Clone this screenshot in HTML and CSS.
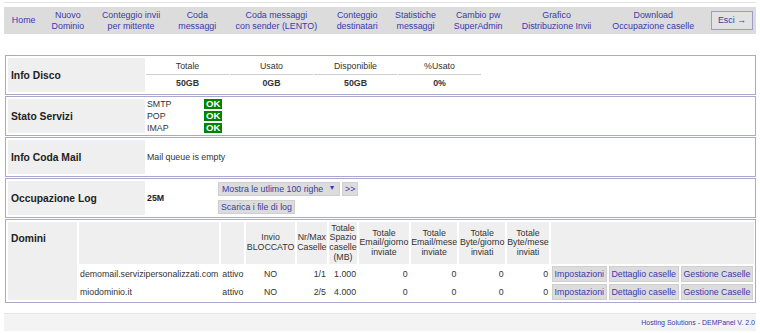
FILE: index.html
```html
<!DOCTYPE html>
<html lang="it">
<head>
<meta charset="UTF-8">
<title>DEMPanel</title>
<link rel="stylesheet" href="styles.css">
</head>
<body>
<div class="page">

<!-- Menu principale -->
<table class="menu">
  <tr>
    <td><a href="#">Home</a></td>
    <td><a href="#">Nuovo<br>Dominio</a></td>
    <td><a href="#">Conteggio invii<br>per mittente</a></td>
    <td><a href="#">Coda<br>messaggi</a></td>
    <td><a href="#">Coda messaggi<br>con sender (LENTO)</a></td>
    <td><a href="#">Conteggio<br>destinatari</a></td>
    <td><a href="#">Statistiche<br>messaggi</a></td>
    <td><a href="#">Cambio pw<br>SuperAdmin</a></td>
    <td><a href="#">Grafico<br>Distribuzione Invii</a></td>
    <td><a href="#">Download<br>Occupazione caselle</a></td>
    <td class="menu-exit"><a href="#" class="exit-button">Esci &rarr;</a></td>
  </tr>
</table>

<!-- Info Disco -->
<table class="section">
  <tr>
    <th class="label">Info Disco</th>
    <td class="content">
      <table class="disk">
        <tr>
          <th>Totale</th>
          <th>Usato</th>
          <th>Disponibile</th>
          <th>%Usato</th>
        </tr>
        <tr>
          <td>50GB</td>
          <td>0GB</td>
          <td>50GB</td>
          <td>0%</td>
        </tr>
      </table>
    </td>
  </tr>
</table>

<!-- Stato Servizi -->
<table class="section">
  <tr>
    <th class="label">Stato Servizi</th>
    <td class="content">
      <table class="services">
        <tr><td class="service-name">SMTP</td><td><span class="ok">OK</span></td></tr>
        <tr><td class="service-name">POP</td><td><span class="ok">OK</span></td></tr>
        <tr><td class="service-name">IMAP</td><td><span class="ok">OK</span></td></tr>
      </table>
    </td>
  </tr>
</table>

<!-- Info Coda Mail -->
<table class="section">
  <tr>
    <th class="label">Info Coda Mail</th>
    <td class="content">Mail queue is empty</td>
  </tr>
</table>

<!-- Occupazione Log -->
<table class="section">
  <tr>
    <th class="label">Occupazione Log</th>
    <td class="content">
      <div class="log-row">
        <span class="log-size">25M</span>
        <div class="log-actions">
          <div class="log-line">
            <span class="select-wrap">
              <select class="log-select">
                <option>Mostra le utlime 100 righe</option>
                <option>Mostra le utlime 500 righe</option>
              </select>
            </span>
            <button class="btn">&gt;&gt;</button>
          </div>
          <div class="log-line">
            <button class="btn">Scarica i file di log</button>
          </div>
        </div>
      </div>
    </td>
  </tr>
</table>

<!-- Domini -->
<table class="section section-domains">
  <tr>
    <th class="label label-domains">Domini</th>
    <td class="content">
      <table class="domains">
        <tr>
          <th class="fit"></th>
          <th class="fit"></th>
          <th class="fit">Invio<br>BLOCCATO</th>
          <th class="fit">Nr/Max<br>Caselle</th>
          <th class="fit">Totale<br>Spazio<br>caselle<br>(MB)</th>
          <th class="fit">Totale<br>Email/giorno<br>inviate</th>
          <th class="fit">Totale<br>Email/mese<br>inviate</th>
          <th class="fit">Totale<br>Byte/giorno<br>inviati</th>
          <th class="fit">Totale<br>Byte/mese<br>inviati</th>
          <th></th>
        </tr>
        <tr>
          <td>demomail.servizipersonalizzati.com</td>
          <td>attivo</td>
          <td class="center">NO</td>
          <td class="right">1/1</td>
          <td class="right">1.000</td>
          <td class="right">0</td>
          <td class="right">0</td>
          <td class="right">0</td>
          <td class="right">0</td>
          <td class="actions">
            <button class="btn">Impostazioni</button>
            <button class="btn">Dettaglio caselle</button>
            <button class="btn">Gestione Caselle</button>
          </td>
        </tr>
        <tr>
          <td>miodominio.it</td>
          <td>attivo</td>
          <td class="center">NO</td>
          <td class="right">2/5</td>
          <td class="right">4.000</td>
          <td class="right">0</td>
          <td class="right">0</td>
          <td class="right">0</td>
          <td class="right">0</td>
          <td class="actions">
            <button class="btn">Impostazioni</button>
            <button class="btn">Dettaglio caselle</button>
            <button class="btn">Gestione Caselle</button>
          </td>
        </tr>
      </table>
    </td>
  </tr>
</table>

<div class="footer">Hosting Solutions - DEMPanel V. 2.0</div>

</div>
</body>
</html>
```

FILE: styles.css
```css
body {
  margin: 0;
  font-family: "Liberation Sans", Arial, sans-serif;
  font-size: 8.8px;
  color: #333;
  background: #fff;
}
.page {
  margin: 2px 4px 0 4px;
  border-top: 1px solid #e2e2e2;
  padding-top: 4px;
}
a {
  color: #3a3aa8;
  text-decoration: none;
}

/* Menu in alto */
.menu {
  width: 100%;
  height: 27px;
  border-collapse: collapse;
  background: #dcdcdc;
  margin-bottom: 21px;
}
.menu td {
  text-align: center;
  font-size: 8.9px;
  line-height: 10.5px;
  padding: 0 6px;
  white-space: nowrap;
}
.menu .menu-exit {
  width: 42px;
  padding: 0 3px 0 6px;
}
.exit-button {
  display: inline-block;
  width: 40px;
  height: 17px;
  line-height: 17px;
  border: 1px solid #9c9cc8;
  background: #e2e2e2;
}

/* Box delle sezioni */
.section {
  width: calc(100% - 1px);
  margin: 0 0 1px 1px;
  border: 1px solid #a9a9cf;
  border-spacing: 2px;
  height: 40px;
  table-layout: fixed;
}
.label {
  width: 131px;
  background: #efefef;
  text-align: left;
  font-size: 10.3px;
  color: #222;
  padding: 0 3px;
}
.content {
  padding: 0;
  vertical-align: middle;
}

/* Info Disco */
.disk {
  border-collapse: separate;
  border-spacing: 1px 0;
  margin-left: -2px;
}
.disk th {
  width: 83px;
  padding: 0;
  font-weight: normal;
  height: 15px;
  border-bottom: 1px solid #cfcfcf;
}
.disk td {
  padding: 0;
  text-align: center;
  font-weight: bold;
  height: 17px;
}

/* Stato Servizi */
.services {
  border-collapse: collapse;
  margin: -1px 0;
}
.services td {
  padding: 0;
  height: 12px;
  line-height: 11px;
}
.service-name {
  width: 57px;
}
.ok {
  display: inline-block;
  background: #008400;
  color: #fff;
  font-weight: bold;
  font-size: 9.6px;
  line-height: 10px;
  padding: 0 2px;
}

/* Occupazione Log */
.log-row {
  display: flex;
  align-items: center;
}
.log-size {
  width: 71px;
  font-weight: bold;
  color: #222;
}
.log-actions {
  display: flex;
  flex-direction: column;
  gap: 4px;
}
.log-line {
  display: flex;
  gap: 2px;
}
.btn {
  font-family: "Liberation Sans", Arial, sans-serif;
  font-size: 8.8px;
  color: #3a3aa8;
  background: #dcdcdc;
  border: 1px solid #cfcfcf;
  padding: 0 2px;
  height: 14px;
  cursor: pointer;
}
.select-wrap {
  position: relative;
  display: inline-block;
}
.log-select {
  appearance: none;
  -webkit-appearance: none;
  font-family: "Liberation Sans", Arial, sans-serif;
  font-size: 8.8px;
  color: #3a3aa8;
  background: #dcdcdc;
  border: 1px solid #cfcfcf;
  border-radius: 0;
  width: 122px;
  height: 14px;
  padding: 0 3px;
  display: block;
}
.select-wrap::after {
  content: "\25BE";
  position: absolute;
  right: 6px;
  top: 1px;
  font-size: 8px;
  color: #3a3aa8;
  pointer-events: none;
}

/* Domini */
.section-domains .label-domains {
  width: 63px;
  vertical-align: top;
  padding-top: 11px;
}
.domains {
  width: calc(100% + 4px);
  margin: -2px;
  border-spacing: 2px;
}
.domains th {
  background: #efefef;
  font-weight: normal;
  height: 42px;
  padding: 0 0.4px;
  line-height: 9.6px;
}
.domains th.fit {
  width: 1px;
}
.domains td {
  padding: 0 1px;
  height: 16px;
  white-space: nowrap;
}
.center { text-align: center; }
.right { text-align: right; }
.actions .btn {
  height: 16px;
  padding: 0 1.5px;
}

/* Piede pagina */
.footer {
  margin-top: 10px;
  background: #f3f3f3;
  border-top: 1px solid #e6e6e6;
  height: 17px;
  line-height: 17px;
  text-align: right;
  font-size: 7px;
  color: #3a3aa8;
  padding-right: 1px;
}
```
